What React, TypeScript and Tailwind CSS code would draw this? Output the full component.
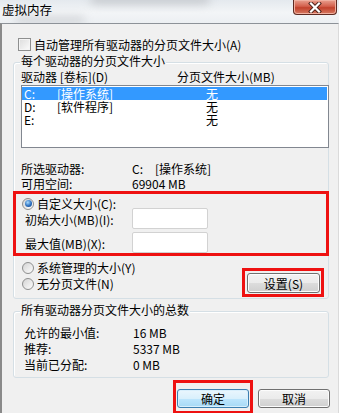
import React from 'react'

// 虚拟内存 dialog (Windows 7 style)

const F = "font-['Noto_Sans_CJK_SC',sans-serif]"

function Checkbox() {
  return (
    <span className="block w-[13px] h-[13px] border border-[#8e8f8f] bg-[linear-gradient(135deg,#dcdcdc,#fbfbfb)] shadow-[inset_0_0_0_1px_#f4f4f4]" />
  )
}

function Radio({ checked }: { checked?: boolean }) {
  return (
    <span className="flex items-center justify-center w-[12px] h-[12px] shrink-0 rounded-full border border-[#8e8f8f] bg-[linear-gradient(135deg,#d4d4d4,#fdfdfd)]">
      {checked && (
        <span className="block w-[7px] h-[7px] rounded-full bg-[radial-gradient(circle_at_40%_35%,#a9dcff,#2b6fbf_55%,#123f7a)]" />
      )}
    </span>
  )
}

function Group({ label, className, children }: { label: string; className: string; children?: React.ReactNode }) {
  return (
    <div className={`relative shrink-0 border border-[#d5dfe5] rounded-[3px] shadow-[inset_1px_1px_0_#ffffff] ${className}`}>
      <span className="absolute left-[6px] -top-[9px] bg-[#f0f0f0] px-[1px] leading-[13px] whitespace-nowrap">{label}</span>
      {children}
    </div>
  )
}

function Row({ drive, label, size, selected }: { drive: string; label: string; size: string; selected?: boolean }) {
  return (
    <div className={`flex h-[13px] leading-[13px] w-[305px] pl-[2px] ${selected ? 'bg-[#3399ff] text-white' : ''}`}>
      <span className="w-[33px]">{drive}</span>
      <span className="w-[149px]">{label}</span>
      <span>{size}</span>
    </div>
  )
}

export default function App() {
  return (
    <div className={`w-[339px] h-[413px] overflow-hidden flex flex-col text-[12px] text-black ${F}`}>
      {/* 标题栏 */}
      <div className="relative flex items-start h-[23px] shrink-0 overflow-hidden bg-[linear-gradient(180deg,#e4e9ee,#f3f5f7_55%,#eceff2)]">
        <div className="absolute left-[90px] -top-[6px] w-[120px] h-[10px] rounded-full bg-[#b9bcc0] blur-[5px] opacity-70" />
        <div className="absolute left-[15px] top-[16px] w-[70px] h-[8px] rounded-full bg-[#c3c6ca] blur-[4px] opacity-60" />
        <span className="relative ml-[2px] mt-[3px] text-[12.5px] leading-[14px]">虚拟内存</span>
        <div className="relative ml-auto mr-[2px] w-[44px] h-[15px] flex items-center justify-center rounded-b-[4px] border border-t-0 border-[#5e2a22] bg-[linear-gradient(180deg,#e9a08f,#d3604c_45%,#c2412b_55%,#d67a63)] shadow-[inset_0_0_0_1px_#f0b0a0]">
          <svg width="14" height="11" viewBox="0 0 14 11">
            <path d="M3 1.5 L11 9.5 M11 1.5 L3 9.5" stroke="#4a2019" strokeWidth="4" strokeLinecap="square" />
            <path d="M3 1.5 L11 9.5 M11 1.5 L3 9.5" stroke="#ffffff" strokeWidth="2.2" strokeLinecap="square" />
          </svg>
        </div>
      </div>

      {/* 内容 */}
      <div className="flex-1 flex flex-col bg-[#f0f0f0] border-t border-t-[#8d9298] border-l-2 border-l-[#8a8a8a] border-r border-r-[#dadada] pl-[11px] pr-[8px]">
        <div className="flex items-center mt-[14px] ml-[5px] h-[13px]">
          <Checkbox />
          <span className="ml-[3px] leading-[13px]">自动管理所有驱动器的分页文件大小(A)</span>
        </div>

        <Group label="每个驱动器的分页文件大小" className="mt-[11px] w-[316px] h-[237px]">
          <div className="flex mt-[7px] pl-[7px] leading-[13px]">
            <span className="w-[156px]">驱动器 [卷标](D)</span>
            <span>分页文件大小(MB)</span>
          </div>
          <div className="mt-[2px] ml-[7px] w-[308px] h-[63px] border border-[#828790] bg-white pt-[1px]">
            <Row drive="C:" label="[操作系统]" size="无" selected />
            <Row drive="D:" label="[软件程序]" size="无" />
            <Row drive="E:" label="" size="无" />
          </div>

          <div className="mt-[13px] pl-[7px] flex leading-[15px]">
            <span className="w-[111px]">所选驱动器:</span>
            <span className="w-[23px]">C:</span>
            <span>[操作系统]</span>
          </div>
          <div className="pl-[7px] flex leading-[15px]">
            <span className="w-[111px]">可用空间:</span>
            <span>69904 MB</span>
          </div>

          <div className="-mx-[1px] border-[3px] border-[#ee1111] pb-0">
            <div className="flex items-center mt-[3px] ml-[6px] h-[13px]">
              <Radio checked />
              <span className="ml-[3px] leading-[13px]">自定义大小(C):</span>
            </div>
            <div className="flex items-center -mt-[2px] h-[21px]">
              <span className="ml-[9px] w-[107px] leading-[13px] pt-[2px]">初始大小(MB)(I):</span>
              <div className="w-[76px] h-[21px] bg-white border border-[#d2d2d2] rounded-[2px]" />
            </div>
            <div className="flex items-center mt-[3px] h-[21px]">
              <span className="ml-[9px] w-[107px] leading-[13px] pt-[2px]">最大值(MB)(X):</span>
              <div className="w-[76px] h-[21px] bg-white border border-[#d2d2d2] rounded-[2px]" />
            </div>
          </div>

          <div className="flex items-start">
            <div className="flex flex-col ml-[8px]">
              <div className="flex items-center mt-[5px] h-[13px]">
                <Radio />
                <span className="ml-[3px] leading-[13px]">系统管理的大小(Y)</span>
              </div>
              <div className="flex items-center mt-[3px] h-[13px]">
                <Radio />
                <span className="ml-[3px] leading-[13px]">无分页文件(N)</span>
              </div>
            </div>
            <div className="ml-auto mr-[4px] mt-[12px] w-[82px] h-[29px] border-[3px] border-[#ee1111] pt-[2px] pl-[2px]">
              <div className="w-[73px] h-[20px] flex items-center justify-center rounded-[3px] border border-[#707070] bg-[linear-gradient(#f2f2f2_0%,#ebebeb_50%,#dddddd_50%,#cfcfcf_100%)] shadow-[inset_0_0_0_1px_#fcfcfc] leading-[13px]">
                设置(S)
              </div>
            </div>
          </div>
        </Group>

        <Group label="所有驱动器分页文件大小的总数" className="mt-[12px] w-[316px] h-[67px]">
          <div className="pt-[13px] pl-[10px] leading-[16px]">
            <div className="flex">
              <span className="w-[109px]">允许的最小值:</span>
              <span>16 MB</span>
            </div>
            <div className="flex">
              <span className="w-[109px]">推荐:</span>
              <span>5337 MB</span>
            </div>
            <div className="flex">
              <span className="w-[109px]">当前已分配:</span>
              <span>0 MB</span>
            </div>
          </div>
        </Group>

        <div className="flex justify-end items-start">
          <div className="mt-[2px] border-[3px] border-[#ee1111] pt-[6px] px-[1px] pb-[3px]">
            <div className="w-[72px] h-[19px] flex items-center justify-center rounded-[3px] border border-[#3c7fb1] bg-[linear-gradient(#eaf6fd_0%,#d9f0fc_50%,#bee6fd_50%,#a7d9f5_100%)] shadow-[inset_0_0_0_1px_#d8effc] leading-[13px]">
              确定
            </div>
          </div>
          <div className="ml-[5px] mt-[11px] w-[72px] h-[19px] flex items-center justify-center rounded-[3px] border border-[#707070] bg-[linear-gradient(#f2f2f2_0%,#ebebeb_50%,#dddddd_50%,#cfcfcf_100%)] shadow-[inset_0_0_0_1px_#fcfcfc] leading-[13px]">
            取消
          </div>
        </div>
      </div>
    </div>
  )
}
